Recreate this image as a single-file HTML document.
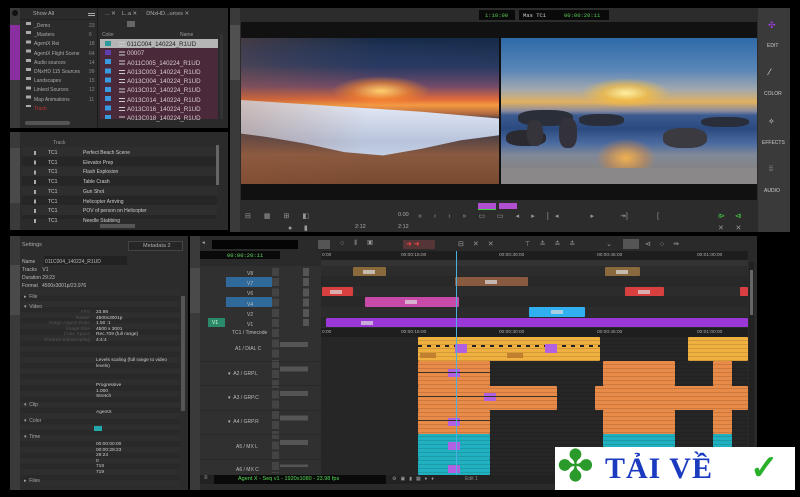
<!DOCTYPE html>
<html><head><meta charset="utf-8"><style>
*{margin:0;padding:0;box-sizing:border-box}
body{width:800px;height:497px;background:#000;position:relative;overflow:hidden;font-family:"Liberation Sans",sans-serif;color:#bbb;font-size:5.5px}
.a{position:absolute}
.t{position:absolute;white-space:nowrap}
.clip{position:absolute;border-radius:1px}
.lbl{position:absolute;width:12px;height:4px;background:#ddd;opacity:.7;top:3px}
</style></head><body>

<!-- ===== Bins panel ===== -->
<div class="a" style="left:10px;top:8px;width:218px;height:120px;background:#2b2b2b"></div>
<div class="a" style="left:10px;top:8px;width:10px;height:120px;background:#3a3a3a"></div>
<div class="a" style="left:10px;top:25px;width:10px;height:55px;background:#8a2fa0"></div>
<div class="a" style="left:12px;top:10px;width:6px;height:6px;border-radius:3px;background:#111"></div>
<div class="t" style="left:33px;top:11px;color:#aaa">Show All</div>
<div class="a" style="left:20px;top:8px;width:77px;height:12px;border-bottom:1px solid #222"></div>
<div class="a" style="left:88px;top:13px;width:7px;height:3px;border-top:1px solid #aaa;border-bottom:1px solid #aaa"></div>
<div class="t" style="left:34px;top:22px;line-height:9.2px;color:#aaa;font-size:5px">_Demo<br>_Masters<br>AgentX Rei<br>AgentX Flight Scene<br>Audio sources<br>DNxHD 115 Sources<br>Landscapes<br>Linked Sources<br>Map Animations<br><span style="color:#c03030">Trash</span></div>
<div class="t" style="left:89px;top:22px;line-height:9.2px;color:#888;font-size:5px">23<br>6<br>18<br>64<br>14<br>99<br>15<br>12<br>11</div>
<div class="a" style="left:26px;top:22px;width:5px;height:85px;background:repeating-linear-gradient(#aaa 0 3px,transparent 3px 9.2px)"></div>
<div class="a" style="left:25px;top:121px;width:45px;height:4px;background:#555;border-radius:2px"></div>
<div class="a" style="left:97px;top:8px;width:131px;height:120px;background:#2a2a2a;border-left:1px solid #1a1a1a"></div>
<div class="t" style="left:105px;top:11px;color:#aaa">... ✕ &nbsp;&nbsp; L..a ✕ &nbsp;&nbsp;&nbsp;&nbsp; DNxHD...urces ✕</div>
<div class="a" style="left:127px;top:21px;width:8px;height:6px;background:#666"></div>
<div class="t" style="left:102px;top:32px;color:#999;font-size:5px">Color</div>
<div class="t" style="left:180px;top:32px;color:#999;font-size:5px">Name</div>
<div class="a" style="left:100px;top:39px;width:118px;height:80px;background:#4a2a3a"></div>
<div class="a" style="left:100px;top:39px;width:118px;height:9px;background:#b5b5b5"></div>
<div class="t" style="left:127px;top:40px;line-height:9.3px;font-size:6.2px;color:#d8c8d0"><span style="color:#222">011C004_140224_R1UD</span><br>00007<br>A011C005_140224_R1UD<br>A013C003_140224_R1UD<br>A013C004_140224_R1UD<br>A013C012_140224_R1UD<br>A013C014_140224_R1UD<br>A013C016_140224_R1UD<br>A013C018_140224_R1UD</div>
<div class="a" style="left:105px;top:41px;width:6px;height:5px;background:#2a9a9a"></div>
<div class="a" style="left:105px;top:50px;width:6px;height:5px;background:#6040b0"></div>
<div class="a" style="left:105px;top:59px;width:6px;height:60px;background:repeating-linear-gradient(#3a9ae0 0 5px,transparent 5px 9.3px)"></div>
<div class="a" style="left:119px;top:41px;width:6px;height:78px;background:repeating-linear-gradient(transparent 0 1px,#ccc 1px 2px,transparent 2px 4px,#ccc 4px 5px,transparent 5px 9.3px)"></div>
<div class="a" style="left:220px;top:34px;width:3px;height:85px;background:#333"></div>

<!-- ===== Markers panel ===== -->
<div class="a" style="left:10px;top:132px;width:218px;height:98px;background:#2b2b2b"></div>
<div class="a" style="left:10px;top:132px;width:10px;height:98px;background:#3a3a3a"></div>
<div class="a" style="left:10px;top:148px;width:10px;height:55px;background:#4a4a4a"></div>
<div class="t" style="left:53px;top:140px;color:#999;font-size:5px">Track</div>
<div class="a" style="left:22px;top:147px;width:195px;height:72px;background:repeating-linear-gradient(#2e2e2e 0 9.7px,#262626 9.7px 19.4px)"></div>
<div class="t" style="left:48px;top:149px;line-height:9.7px;font-size:5px;color:#ccc">TC1<br>TC1<br>TC1<br>TC1<br>TC1<br>TC1<br>TC1<br>TC1</div>
<div class="t" style="left:83px;top:149px;line-height:9.7px;font-size:5px;color:#ccc">Perfect Beach Scene<br>Elevator Prep<br>Flash Explosion<br>Table Crash<br>Gun Shot<br>Helicopter Arriving<br>POV of person on Helicopter<br>Needle Stabbing</div>
<div class="a" style="left:34px;top:151px;width:2px;height:72px;background:repeating-linear-gradient(#aaa 0 4px,transparent 4px 9.7px)"></div>
<div class="a" style="left:216px;top:145px;width:3px;height:40px;background:#666"></div>
<div class="a" style="left:100px;top:224px;width:35px;height:4px;background:#555"></div>

<!-- ===== Composer ===== -->
<div class="a" style="left:230px;top:8px;width:528px;height:224px;background:#2c2c2c"></div>
<div class="a" style="left:230px;top:8px;width:10px;height:224px;background:#3a3a3a"></div>
<div class="a" style="left:230px;top:25px;width:10px;height:55px;background:#505050"></div>
<div class="a" style="left:241px;top:22px;width:516px;height:178px;background:#111"></div>
<div class="a" style="left:479px;top:10px;width:36px;height:10px;background:#0a0a0a"></div>
<div class="t" style="left:485px;top:12px;color:#5c5;font-family:'Liberation Mono',monospace;font-size:5.5px">1:10:00</div>
<div class="a" style="left:519px;top:10px;width:90px;height:10px;background:#0a0a0a"></div>
<div class="t" style="left:523px;top:12px;color:#ccc;font-family:'Liberation Mono',monospace;font-size:5.5px">Mas TC1</div>
<div class="t" style="left:564px;top:12px;color:#5c5;font-family:'Liberation Mono',monospace;font-size:5.5px">00:00:20:11</div>

<!-- left image -->
<div class="a" style="left:241px;top:38px;width:258px;height:146px;overflow:hidden;background:linear-gradient(#152a48 0%,#2a3a62 20%,#704a6a 33%,#e06a3a 42%,#f59a40 46%,#b06840 52%,#3a3a48 56%,#4a4048 66%,#8a5a40 80%,#7a4a30 100%)">
 <div class="a" style="left:90px;top:38px;width:100px;height:30px;border-radius:50%;background:radial-gradient(#ffd070,rgba(255,140,40,.6) 40%,transparent 70%)"></div>
 <div class="a" style="left:100px;top:60px;width:80px;height:40px;background:radial-gradient(rgba(240,150,80,.6),transparent 70%)"></div>
 <div class="a" style="left:0;top:62px;width:258px;height:84px;background:linear-gradient(#e8eef8,#b8c4dc 50%,#dde6f4);clip-path:polygon(0 0,40% 8%,70% 14%,100% 22%,100% 42%,85% 48%,70% 58%,55% 66%,40% 62%,25% 52%,10% 44%,0 40%)"></div>
 <div class="a" style="left:0;top:0;width:258px;height:146px;background:linear-gradient(100deg,rgba(150,90,60,.35),transparent 50%)"></div>
 <div class="a" style="left:-20px;top:0;width:300px;height:30px;background:radial-gradient(ellipse at 40% 60%,rgba(40,60,100,.5),transparent 70%)"></div>
</div>
<div class="a" style="left:499px;top:38px;width:2px;height:146px;background:#111"></div>
<!-- right image -->
<div class="a" style="left:501px;top:38px;width:256px;height:146px;overflow:hidden;background:linear-gradient(#2e6aa8 0%,#5a86b8 22%,#a0a8b0 35%,#e0b060 44%,#8a8aa0 50%,#3a5a90 53%,#2a4a80 62%,#4a6aa0 72%,#808898 80%,#8a8070 100%)">
 <div class="a" style="left:80px;top:40px;width:90px;height:30px;border-radius:50%;background:radial-gradient(#fff0a0,rgba(250,190,60,.7) 35%,transparent 70%)"></div>
 <div class="a" style="left:95px;top:100px;width:60px;height:40px;background:radial-gradient(#f0b050,rgba(230,140,50,.4) 45%,transparent 70%)"></div>
 <div class="a" style="left:17px;top:72px;width:55px;height:16px;border-radius:40%;background:#2a2e38"></div>
 <div class="a" style="left:5px;top:92px;width:40px;height:16px;border-radius:40%;background:#2a2a30"></div>
 <div class="a" style="left:26px;top:82px;width:16px;height:26px;border-radius:40%;background:#35343a"></div>
 <div class="a" style="left:58px;top:80px;width:18px;height:30px;border-radius:40%;background:#33323a"></div>
 <div class="a" style="left:78px;top:76px;width:45px;height:12px;border-radius:40%;background:#2a2e3a"></div>
 <div class="a" style="left:200px;top:79px;width:48px;height:10px;border-radius:40%;background:#2a2e3a"></div>
 <div class="a" style="left:162px;top:90px;width:44px;height:20px;border-radius:40%;background:#3a3a40"></div>
 <div class="a" style="left:0;top:130px;width:256px;height:16px;background:#8a8888"></div>
</div>

<!-- monitor controls -->
<div class="a" style="left:478px;top:203px;width:18px;height:6px;background:#b050d0"></div>
<div class="a" style="left:499px;top:203px;width:18px;height:6px;background:#b050d0"></div>
<div class="a" style="left:478px;top:209px;width:18px;height:1px;background:#4c4"></div>
<div class="t" style="left:245px;top:212px;font-size:7px;color:#999;letter-spacing:13px">⊟▦⊞◧</div>
<div class="t" style="left:398px;top:212px;color:#aaa">0.00</div>
<div class="t" style="left:398px;top:224px;color:#aaa">2:12</div>
<div class="t" style="left:355px;top:224px;color:#aaa">2:12</div>
<div class="t" style="left:418px;top:212px;font-size:7px;color:#999;letter-spacing:12px">«‹›»▭▭◂▸]</div>
<div class="t" style="left:555px;top:212px;font-size:7px;color:#999;letter-spacing:15px">◂ ▸ ]</div>
<div class="t" style="left:620px;top:212px;font-size:7px;color:#999">⇥ &nbsp;&nbsp;&nbsp;&nbsp;&nbsp;&nbsp;&nbsp;&nbsp;&nbsp;&nbsp;&nbsp;&nbsp;&nbsp;&nbsp;&nbsp;[</div>
<div class="t" style="left:718px;top:212px;font-size:7px;color:#4c4">⧐ &nbsp;&nbsp;&nbsp; ⧏</div>
<div class="t" style="left:718px;top:224px;font-size:7px;color:#999">✕ &nbsp;&nbsp;&nbsp;&nbsp; ✕</div>
<div class="t" style="left:288px;top:224px;font-size:7px;color:#999">● &nbsp;&nbsp;&nbsp;&nbsp; ▮</div>

<!-- right sidebar -->
<div class="a" style="left:758px;top:8px;width:32px;height:224px;background:#3a3a3a"></div>
<div class="t" style="left:768px;top:20px;color:#a040e0;font-size:9px">✣</div>
<div class="t" style="left:767px;top:43px;color:#ccc;font-size:5px">EDIT</div>
<div class="t" style="left:769px;top:67px;color:#ddd;font-size:9px">⁄</div>
<div class="t" style="left:764px;top:91px;color:#ccc;font-size:5px">COLOR</div>
<div class="t" style="left:768px;top:117px;color:#ddd;font-size:8px">✧</div>
<div class="t" style="left:762px;top:140px;color:#ccc;font-size:5px">EFFECTS</div>
<div class="t" style="left:769px;top:166px;color:#ccc;font-size:7px">⁞⁞</div>
<div class="t" style="left:764px;top:188px;color:#ccc;font-size:5px">AUDIO</div>

<!-- ===== Inspector ===== -->
<div class="a" style="left:10px;top:236px;width:178px;height:254px;background:#2c2c2c"></div>
<div class="a" style="left:10px;top:236px;width:10px;height:254px;background:#3a3a3a"></div>
<div class="a" style="left:10px;top:265px;width:10px;height:50px;background:#4a4a4a"></div>
<div class="t" style="left:22px;top:242px;color:#aaa">Settings</div>
<div class="a" style="left:128px;top:241px;width:55px;height:10px;border:1px solid #444;background:#262626"></div>
<div class="t" style="left:143px;top:243px;color:#aaa">Metadata 2</div>
<div class="a" style="left:44px;top:256px;width:83px;height:9px;background:#222"></div>
<div class="t" style="left:22px;top:258px;line-height:8px;color:#bbb;font-size:5px">Name &nbsp;&nbsp;&nbsp;&nbsp;&nbsp; 011C004_140224_R1UD<br>Tracks &nbsp;&nbsp; V1<br>Duration 29:23<br>Format &nbsp; 4500x3001p/23.976</div>
<div class="a" style="left:20px;top:290px;width:160px;height:195px;background:repeating-linear-gradient(#2e2e2e 0 5.6px,#292929 5.6px 11.2px)"></div>
<div class="a" style="left:181px;top:296px;width:4px;height:115px;background:#555"></div>
<div class="t" style="left:24px;top:292px;line-height:10px;color:#aaa;font-size:5px">▸ &nbsp;File<br>▾ &nbsp;Video</div>
<div class="t" style="left:24px;top:402px;color:#aaa;font-size:5px">▾ &nbsp;Clip</div>
<div class="t" style="left:24px;top:418px;color:#aaa;font-size:5px">▾ &nbsp;Color</div>
<div class="t" style="left:24px;top:434px;color:#aaa;font-size:5px">▾ &nbsp;Time</div>
<div class="t" style="left:24px;top:478px;color:#aaa;font-size:5px">▸ &nbsp;Files</div>
<div class="t" style="left:96px;top:310px;line-height:5.6px;color:#ccc;font-size:4.8px">23.98<br>4500x3001p<br>1.50 :1<br>4500 x 3001<br>Rec.709 (full range)<br>4:4:4</div>
<div class="t" style="left:96px;top:358px;line-height:5.6px;color:#ccc;font-size:4.8px">Levels scaling (full range to video<br>levels)</div>
<div class="t" style="left:96px;top:383px;line-height:5.6px;color:#ccc;font-size:4.8px">Progressive<br>1.000<br>Stretch</div>
<div class="t" style="left:96px;top:410px;color:#ccc;font-size:4.8px">AgentX</div>
<div class="a" style="left:94px;top:426px;width:8px;height:5px;background:#2aa"></div>
<div class="t" style="left:96px;top:442px;line-height:5.6px;color:#ccc;font-size:4.8px">00:00:00:00<br>00:00:29:23<br>29:23<br>0<br>718<br>719</div>
<div class="t" style="left:40px;top:310px;line-height:5.6px;color:#555;font-size:4.8px;text-align:right;width:50px">FPS<br>Raster<br>Image Aspect Ratio<br>Image Size<br>Color Space<br>Chroma Subsampling</div>

<!-- ===== Timeline ===== -->
<div class="a" style="left:190px;top:236px;width:567px;height:254px;background:#2a2a2a"></div>
<div class="a" style="left:190px;top:236px;width:10px;height:254px;background:#3a3a3a"></div>
<div class="a" style="left:190px;top:268px;width:10px;height:45px;background:#4a4a4a"></div>
<div class="a" style="left:212px;top:240px;width:86px;height:9px;background:#050505"></div>
<div class="t" style="left:202px;top:240px;color:#aaa">◂</div>
<div class="a" style="left:200px;top:251px;width:80px;height:8px;background:#0a0a0a"></div>
<div class="t" style="left:227px;top:252px;color:#6d6;font-family:'Liberation Mono',monospace;font-size:5.5px">00:00:20:11</div>
<div class="a" style="left:318px;top:240px;width:12px;height:9px;background:#555"></div>
<div class="a" style="left:403px;top:240px;width:32px;height:9px;background:#553535"></div>
<div class="t" style="left:406px;top:240px;color:#e44;font-size:7px">➜ ➜</div>
<div class="t" style="left:340px;top:240px;color:#999;font-size:7px;letter-spacing:10px">○⦀▣</div>
<div class="t" style="left:458px;top:240px;color:#999;font-size:7px;letter-spacing:9px">⊟✕✕ &nbsp;⊤≛≛≛ &nbsp;⌄</div>
<div class="a" style="left:623px;top:239px;width:16px;height:10px;background:#555"></div>
<div class="t" style="left:645px;top:240px;color:#999;font-size:7px;letter-spacing:9px">⊲○⇛</div>
<!-- ruler -->
<div class="a" style="left:321px;top:251px;width:427px;height:9px;background:#1e1e1e"></div>
<div class="t" style="left:322px;top:253px;color:#aaa;font-size:4.8px">0:00</div>
<div class="t" style="left:401px;top:253px;color:#aaa;font-size:4.8px">00:00:15:00</div>
<div class="t" style="left:499px;top:253px;color:#aaa;font-size:4.8px">00:00:30:00</div>
<div class="t" style="left:597px;top:253px;color:#aaa;font-size:4.8px">00:00:45:00</div>
<div class="t" style="left:697px;top:253px;color:#aaa;font-size:4.8px">00:01:00:00</div>
<div class="a" style="left:321px;top:260px;width:427px;height:6px;background:#333"></div>
<!-- track headers -->
<div class="a" style="left:200px;top:266px;width:121px;height:209px;background:#303030"></div>
<div class="a" style="left:226px;top:277px;width:46px;height:10px;background:#2f6a9a"></div>
<div class="a" style="left:226px;top:297px;width:46px;height:10px;background:#2f6a9a"></div>
<div class="a" style="left:208px;top:318px;width:17px;height:9px;background:#2a8a6a"></div>
<div class="t" style="left:212px;top:320px;color:#dfd;font-size:5px">V1</div>
<div class="t" style="left:247px;top:269px;line-height:10.2px;color:#bbb;font-size:5px">V8<br>V7<br>V6<br>V4<br>V2<br>V1</div>
<div class="t" style="left:232px;top:330px;color:#bbb;font-size:5px">TC1 / Timecode</div>
<div class="a" style="left:272px;top:268px;width:7px;height:205px;background:repeating-linear-gradient(#444 0 8px,transparent 8px 10.2px)"></div>
<div class="a" style="left:303px;top:268px;width:6px;height:58px;background:repeating-linear-gradient(#555 0 8px,transparent 8px 10.2px)"></div>
<div class="t" style="left:235px;top:346px;color:#bbb;font-size:5px">A1 / DIAL C</div>
<div class="t" style="left:228px;top:371px;color:#bbb;font-size:5px">▾ &nbsp;A2 / GRP.L</div>
<div class="t" style="left:228px;top:395px;color:#bbb;font-size:5px">▾ &nbsp;A3 / GRP.C</div>
<div class="t" style="left:228px;top:419px;color:#bbb;font-size:5px">▾ &nbsp;A4 / GRP.R</div>
<div class="t" style="left:236px;top:444px;color:#bbb;font-size:5px">A5 / MX L</div>
<div class="t" style="left:236px;top:467px;color:#bbb;font-size:5px">A6 / MX C</div>
<div class="a" style="left:280px;top:342px;width:28px;height:125px;background:repeating-linear-gradient(#555 0 5px,transparent 5px 24.5px)"></div>
<div class="a" style="left:200px;top:337px;width:121px;height:138px;background:repeating-linear-gradient(transparent 0 24px,#222 24px 24.5px)"></div>
<!-- tracks area -->
<div class="a" style="left:321px;top:266px;width:427px;height:209px;background:repeating-linear-gradient(#2c2c2c 0 10.2px,#282828 10.2px 20.4px)"></div>
<div class="a" style="left:321px;top:328px;width:427px;height:9px;background:#1e1e1e"></div>
<div class="t" style="left:322px;top:330px;color:#aaa;font-size:4.8px">0:00</div>
<div class="t" style="left:401px;top:330px;color:#aaa;font-size:4.8px">00:00:15:00</div>
<div class="t" style="left:499px;top:330px;color:#aaa;font-size:4.8px">00:00:30:00</div>
<div class="t" style="left:597px;top:330px;color:#aaa;font-size:4.8px">00:00:45:00</div>
<div class="t" style="left:697px;top:330px;color:#aaa;font-size:4.8px">00:01:00:00</div>
<div class="a" style="left:321px;top:337px;width:427px;height:138px;background:#262626"></div>
<div class="a" style="left:749px;top:262px;width:5px;height:213px;background:#222"></div>
<div class="a" style="left:750px;top:270px;width:3px;height:45px;background:#666"></div>
<!-- video clips -->
<div class="clip" style="left:353px;top:267px;width:33px;height:9px;background:#8a6a3c"><div class="lbl" style="left:10px"></div></div>
<div class="clip" style="left:605px;top:267px;width:35px;height:9px;background:#8a6a3c"><div class="lbl" style="left:11px"></div></div>
<div class="clip" style="left:455px;top:277px;width:73px;height:9px;background:#8a5a40"><div class="lbl" style="left:30px"></div></div>
<div class="clip" style="left:322px;top:287px;width:31px;height:9px;background:#d84040"><div class="lbl" style="left:8px"></div></div>
<div class="clip" style="left:625px;top:287px;width:39px;height:9px;background:#d84040"><div class="lbl" style="left:13px"></div></div>
<div class="clip" style="left:740px;top:287px;width:8px;height:9px;background:#d84040"></div>
<div class="clip" style="left:365px;top:297px;width:94px;height:10px;background:#c84aa8"><div class="lbl" style="left:40px"></div></div>
<div class="clip" style="left:529px;top:307px;width:56px;height:10px;background:#30b0f0"><div class="lbl" style="left:22px"></div></div>
<div class="clip" style="left:326px;top:318px;width:422px;height:9px;background:#9a38d8"><div class="lbl" style="left:35px"></div></div>
<!-- audio clips -->
<div class="clip" style="left:418px;top:337px;width:182px;height:24px;background:#f0b040"></div>
<div class="clip" style="left:688px;top:337px;width:60px;height:24px;background:#f0b040"></div>
<div class="clip" style="left:418px;top:361px;width:72px;height:25px;background:#e88a48"></div>
<div class="clip" style="left:603px;top:361px;width:72px;height:25px;background:#e88a48"></div>
<div class="clip" style="left:713px;top:361px;width:19px;height:25px;background:#e88a48"></div>
<div class="clip" style="left:418px;top:386px;width:139px;height:24px;background:#e88a48"></div>
<div class="clip" style="left:595px;top:386px;width:153px;height:24px;background:#e88a48"></div>
<div class="clip" style="left:418px;top:410px;width:72px;height:24px;background:#e88a48"></div>
<div class="clip" style="left:603px;top:410px;width:72px;height:24px;background:#e88a48"></div>
<div class="clip" style="left:713px;top:410px;width:19px;height:24px;background:#e88a48"></div>
<div class="clip" style="left:418px;top:434px;width:72px;height:25px;background:#20b0c0"></div>
<div class="clip" style="left:603px;top:434px;width:72px;height:13px;background:#20b0c0"></div>
<div class="clip" style="left:713px;top:434px;width:19px;height:13px;background:#20b0c0"></div>
<div class="clip" style="left:418px;top:459px;width:72px;height:16px;background:#20b0c0"></div>
<div class="a" style="left:418px;top:337px;width:330px;height:138px;background:repeating-linear-gradient(transparent 0 3px,rgba(0,0,0,.12) 3px 4px)"></div>
<div class="a" style="left:418px;top:345px;width:182px;height:2px;background:repeating-linear-gradient(90deg,#222 0 4px,transparent 4px 9px)"></div>
<div class="a" style="left:455px;top:344px;width:12px;height:9px;background:#b060e0"></div>
<div class="a" style="left:545px;top:344px;width:12px;height:9px;background:#b060e0"></div>
<div class="a" style="left:448px;top:369px;width:12px;height:8px;background:#b060e0"></div>
<div class="a" style="left:484px;top:393px;width:12px;height:8px;background:#b060e0"></div>
<div class="a" style="left:448px;top:418px;width:12px;height:8px;background:#b060e0"></div>
<div class="a" style="left:448px;top:442px;width:12px;height:8px;background:#b060e0"></div>
<div class="a" style="left:448px;top:465px;width:12px;height:8px;background:#b060e0"></div>
<div class="a" style="left:418px;top:372px;width:72px;height:1px;background:#332"></div>
<div class="a" style="left:418px;top:396px;width:139px;height:1px;background:#332"></div>
<div class="a" style="left:418px;top:420px;width:72px;height:1px;background:#332"></div>
<div class="a" style="left:420px;top:353px;width:16px;height:5px;background:#c08030"></div>
<div class="a" style="left:507px;top:353px;width:16px;height:5px;background:#c08030"></div>
<!-- playhead -->
<div class="a" style="left:456px;top:251px;width:1px;height:224px;background:#4ab0e0"></div>
<!-- status bar -->
<div class="a" style="left:200px;top:475px;width:557px;height:9px;background:#222"></div>
<div class="a" style="left:214px;top:475px;width:172px;height:9px;background:#0a0a0a"></div>
<div class="t" style="left:238px;top:476px;color:#5d5;font-size:5.5px">Agent X - Seq v1 - 1920x1080 - 23.98 fps</div>
<div class="t" style="left:204px;top:475px;color:#aaa;font-size:6px">≡</div>
<div class="t" style="left:392px;top:476px;color:#999;font-size:5px;letter-spacing:4px">⚙▣▮▦♦♦</div>
<div class="t" style="left:465px;top:476px;color:#888;font-size:5px">Edit 1</div>

<!-- watermark -->
<div class="a" style="left:555px;top:447px;width:240px;height:43px;background:#fff"></div>
<div class="t" style="left:557px;top:443px;color:#2a9a2a;font-size:44px;line-height:48px">✤</div>
<div class="t" style="left:605px;top:449px;color:#1a3ac0;font-family:'Liberation Serif',serif;font-weight:bold;font-size:30px;line-height:40px;letter-spacing:1px">TẢI VỀ</div>
<div class="t" style="left:750px;top:446px;color:#2ab02a;font-size:34px;line-height:44px;font-weight:bold">✓</div>
</body></html>
